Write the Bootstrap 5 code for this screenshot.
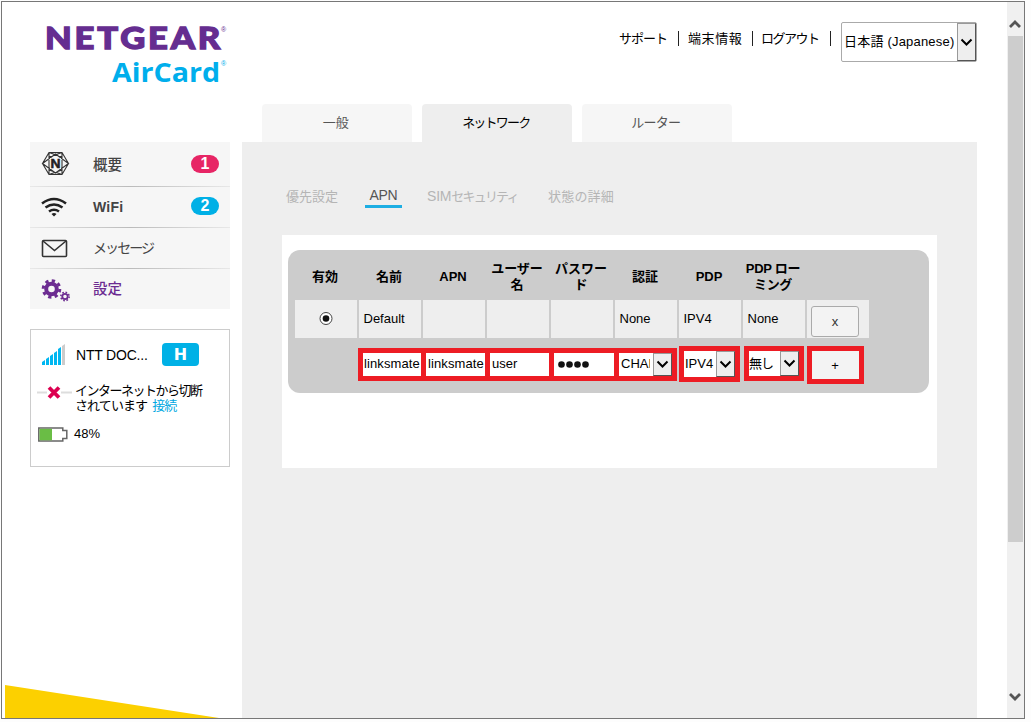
<!DOCTYPE html>
<html lang="ja">
<head>
<meta charset="utf-8">
<title>NETGEAR AirCard</title>
<link rel="stylesheet" href="https://cdn.jsdelivr.net/npm/bootstrap@5.3.0/dist/css/bootstrap.min.css">
<style>
body{margin:0;height:722px;overflow:hidden;background:#fdfdfd;font-family:"Liberation Sans","Noto Sans CJK JP",sans-serif;font-size:13px;line-height:16px;color:#000}
.frame{width:1024px;height:718px;margin:1px 0 0 1px;border:1px solid #777;background:#fff;overflow:hidden}
.page{padding:0 30px 0 28px}
.top{height:102px}
.brand{margin:18px 0 0 14px;overflow:visible}
.toplinks{padding-top:20px}
.toplinks .lnk{letter-spacing:-1px;height:32px;line-height:33px;white-space:nowrap}
.bar{width:1px;height:15px;background:#222;margin-top:9px}
.lang{width:136px;height:40px;border:1px solid #aaa;border-radius:2px;margin:0 0 0 10px}
.arrow{background:#eee;border:1px solid #999;border-right-color:#555;border-bottom-color:#555}
.side{width:200px;margin-top:38px}
.menu{background:#f6f6f6}
.item{height:40px;padding-left:11px;padding-right:11px;color:#444}
.item:first-child{height:44px}
.item .ico{width:52px;height:30px}
.rule{height:1px;background:linear-gradient(90deg,#e8e8e8,#bbb 50%,#e8e8e8)}
.pill{width:28px;height:18px;border-radius:9px;font:bold 16px/18px "Liberation Sans",sans-serif;color:#fff;text-align:center}
.purple{color:#6c2c91}
.status{height:138px;border:1px solid #ccc;margin-top:20px;padding:9px 7px 0 6px}
.hbadge{width:37px;height:23px;border-radius:4px;background:#00b1e6;color:#fff;font:900 16px/24px "DejaVu Sans",sans-serif;text-align:center}
.cyan{color:#00a7e1}
.main{width:735px;margin-left:12px}
.tabs{padding-left:20px;gap:10.5px;height:38px}
.tabx{width:149.5px;background:#f6f6f6;border-radius:4px 4px 0 0;text-align:center;line-height:38px;color:#555;padding-right:2px}
.tabx.on{background:#eee;color:#000}
.pane{background:#eee;height:578px;padding:45px 40px 0}
.subs{height:48px;padding-left:4px;color:#b5b5b5}
.subs .cur{color:#555;border-bottom:3px solid #1daee3;width:37px;text-align:center;font-size:14px;height:21px;line-height:17px;letter-spacing:-.3px}
.white{background:#fff;height:233px;padding:15px 8px 0 6px}
.grey{background:#ccc;height:143px;border-radius:12px;padding-left:7px}
.cells{display:grid;grid-template-columns:repeat(9,62px);column-gap:2px}
.heads{height:50px;padding-top:4px;font-weight:bold;align-items:center;text-align:center;margin-left:-1px;width:575px}
.vals>div{background:#eee;height:38px;line-height:37px;padding-left:4.5px}
.btnx{border:1px solid #aaa;border-radius:3px;background:#f3f3f3;color:#333;width:48px;height:31px;line-height:30px;text-align:center;margin-top:6px}
.edit{padding-left:63px;margin-top:8px}
.red{background:#ed1c24;display:flex}
.fld{background:#fff;white-space:nowrap;overflow:hidden;display:flex}
.fld .tx{overflow:hidden;flex:1;padding-left:2px}
.fld .arrow{width:19px;flex:none;display:flex;align-items:center;justify-content:center}
.scroll{width:17px;background:#f0f0f0;padding-left:1px}
.thumb{height:506px;width:15px;background:#cdcdcd}
.wedge{left:5px;top:685px}
</style>
</head>
<body>
<div class="frame d-flex">
 <div class="page flex-grow-1">
  <header class="top d-flex justify-content-between">
   <svg class="brand" width="200" height="70">
    <text x="1" y="29" font-family="Lato,sans-serif" font-size="31" font-weight="900" fill="#652d90" stroke="#652d90" stroke-width="1.300" letter-spacing="2.500" textLength="178" lengthAdjust="spacingAndGlyphs">NETGEAR</text>
    <text x="68" y="62" font-family="Open Sans,sans-serif" font-size="27.500" font-weight="700" fill="#00aeec" textLength="108" lengthAdjust="spacingAndGlyphs">AirCard</text>
    <text x="177" y="12" font-size="7" fill="#652d90">®</text><text x="177" y="46" font-size="7" fill="#00aeec">®</text>
   </svg>
   <nav class="toplinks d-flex">
    <span class="lnk" style="width:59px">サポート</span><i class="bar"></i>
    <span class="lnk" style="width:73px;padding-left:9px;letter-spacing:.6px">端末情報</span><i class="bar"></i>
    <span class="lnk" style="width:77px;padding-left:8px;letter-spacing:-1.500px">ログアウト</span><i class="bar"></i>
    <div class="lang d-flex"><span class="flex-grow-1 text-nowrap" style="padding-left:2px;line-height:38px;letter-spacing:.2px">日本語 (Japanese)</span><span class="arrow d-flex align-items-center justify-content-center" style="width:19px"><svg width="13" height="9"><path d="M1.500 1.500l5 5 5-5" fill="none" stroke="#000" stroke-width="2"/></svg></span></div>
   </nav>
  </header>
  <div class="d-flex">
   <aside class="side">
    <div class="menu">
     <div class="item d-flex align-items-center"><span class="ico"><svg width="30" height="30" viewBox="0 0 30 30" fill="none" stroke="#333" stroke-width="1.1"><path d="M8 3.500h13l6.500 11-6.500 11h-13l-6.500-11zM8 3.500L21 8M21 3.500L8 8M8 25.500L21 21M21 25.500L8 21M8 3.500v22M21 3.500v22M1.500 14.500L14.500 5l13 9.500L14.500 24z"/><rect x="9" y="9" width="11" height="11" fill="#f6f6f6" stroke="none"/><text x="9.500" y="19" font-size="12.500" font-weight="bold" font-family="Liberation Sans" fill="#222" stroke="#222" stroke-width=".5" textLength="10" lengthAdjust="spacingAndGlyphs">N</text></svg></span><b class="flex-grow-1" style="font-size:14.500px;font-weight:500;padding-top:2px">概要</b><span class="pill" style="background:#e72565">1</span></div>
     <div class="rule"></div>
     <div class="item d-flex align-items-center"><span class="ico"><svg width="26" height="30" viewBox="0 0 26 30" fill="none" stroke="#222" stroke-width="2.600"><path d="M1 11.500q12-9 24 0M4.500 15.500q8.500-6 17 0M8 19.500q5-3.500 10 0"/><path d="M10.500 22q2.500-2 5 0l-2.500 2.500z" fill="#222" stroke="none"/></svg></span><b class="flex-grow-1" style="font-size:14px;letter-spacing:.2px">WiFi</b><span class="pill" style="background:#00b0e6;margin-top:-2px">2</span></div>
     <div class="rule"></div>
     <div class="item d-flex align-items-center"><span class="ico"><svg width="27" height="30" fill="none" stroke="#333" stroke-width="1.600"><rect x="1.500" y="7.500" width="24" height="16" rx="1"/><path d="M2 8l11.500 9.500L25 8"/></svg></span><span style="font-size:14px;letter-spacing:-1.900px">メッセージ</span></div>
     <div class="rule"></div>
     <div class="item d-flex align-items-center"><span class="ico"><svg width="30" height="30" fill="none" stroke="#6c2c91"><circle cx="10.500" cy="15" r="5.300" stroke-width="4"/><circle cx="10.500" cy="15" r="8.300" stroke-width="3" stroke-dasharray="3.260 3.260"/><circle cx="24" cy="22.500" r="2.700" stroke-width="1.800"/><circle cx="24" cy="22.500" r="4.200" stroke-width="1.500" stroke-dasharray="1.650 1.650"/></svg></span><span class="purple" style="font-size:14.500px;font-weight:500">設定</span></div>
    </div>
    <div class="status">
     <div class="d-flex align-items-center" style="height:31px"><svg width="30" height="26" style="margin-left:4px"><path d="M1 23v-3l3-2v5zM5 23v-6l3-2v8zM9 23v-9l3-2v11zM13 23V11l3-2v14zM17 23V7l3-2v18z" fill="#00b7f1"/><path d="M21 23V4l3-2v21z" fill="#ccc"/></svg><span style="width:91px;font-size:14px;padding-left:5px;letter-spacing:-.2px">NTT DOC...</span><span class="hbadge">H</span></div>
     <div class="d-flex text-nowrap" style="margin-top:13px;line-height:15px"><svg width="38" height="18"><path d="M0 9.500h10M24 9.500h11" stroke="#ddd" stroke-width="2"/><path d="M12 4.500l10 10M22 4.500L12 14.500" stroke="#dc0050" stroke-width="3.800"/></svg><div><div style="letter-spacing:-1.500px">インターネットから切断</div><div style="letter-spacing:-.9px">されています<span class="cyan" style="padding-left:5px">接続</span></div></div></div>
     <div class="d-flex align-items-center" style="margin-top:12px"><svg width="36" height="16" style="margin-left:1px"><path d="M.8 2h24v2.500h4v8h-4v2.500h-24z" fill="#fff" stroke="#666" stroke-width="1.500"/><path d="M1.500 2.800h12.500v11.500H1.500z" fill="#6abd45"/></svg><span style="padding-top:1px">48%</span></div>
    </div>
   </aside>
   <main class="main">
    <div class="tabs d-flex"><div class="tabx">一般</div><div class="tabx on" style="letter-spacing:-1.800px">ネットワーク</div><div class="tabx" style="letter-spacing:-.7px">ルーター</div></div>
    <div class="pane">
     <div class="subs d-flex"><span style="width:79px;line-height:19px">優先設定</span><span class="cur">APN</span><span style="margin-left:25px;width:121px;line-height:18px;letter-spacing:-1.800px"><span style="font-size:14px;letter-spacing:-.2px">SIM</span>セキュリティ</span><span style="line-height:19px;letter-spacing:.2px">状態の詳細</span></div>
     <section class="white">
      <div class="grey">
       <div class="cells heads"><div>有効</div><div>名前</div><div>APN</div><div class="text-nowrap">ユーザー<br>名</div><div class="text-nowrap">パスワー<br>ド</div><div>認証</div><div>PDP</div><div class="text-nowrap" style="letter-spacing:-.300px">PDP ロー<br>ミング</div></div>
       <div class="cells vals"><div class="d-flex align-items-center justify-content-center p-0"><svg width="14" height="14"><circle cx="7" cy="6.500" r="6" fill="#fff" stroke="#444"/><circle cx="7" cy="6.500" r="3.300" fill="#111"/></svg></div><div>Default</div><div></div><div></div><div></div><div>None</div><div>IPV4</div><div>None</div><div style="padding-left:4px" class="d-flex"><span class="btnx">x</span></div></div>
       <div class="edit d-flex align-items-start">
        <div class="red" style="margin-top:2px;width:319px;height:33px;padding:5px">
         <div class="fld" style="width:58px;line-height:21px"><span class="tx" style="padding-left:1px;letter-spacing:.1px">linksmate</span></div>
         <div class="fld" style="width:59px;margin-left:5px;line-height:21px"><span class="tx" style="letter-spacing:.1px">linksmate</span></div>
         <div class="fld" style="width:59px;margin-left:5px;line-height:21px"><span class="tx">user</span></div>
         <div class="fld" style="width:60px;margin-left:5px"><svg width="40" height="22" fill="#111"><circle cx="7.500" cy="11.500" r="3.300"/><circle cx="15.500" cy="11.500" r="3.300"/><circle cx="23.500" cy="11.500" r="3.300"/><circle cx="31.500" cy="11.500" r="3.300"/></svg></div>
         <div class="fld" style="width:53px;margin-left:5px;line-height:21px"><span class="tx" style="margin-right:3px">CHAP</span><span class="arrow"><svg width="13" height="9"><path d="M1.500 1.500l5 5 5-5" fill="none" stroke="#000" stroke-width="2"/></svg></span></div>
        </div>
        <div class="red" style="margin-left:2px;width:61px;height:36px;padding:5px"><div class="fld w-100" style="line-height:25px"><span class="tx" style="padding-left:1px">IPV4</span><span class="arrow"><svg width="13" height="9"><path d="M1.500 1.500l5 5 5-5" fill="none" stroke="#000" stroke-width="2"/></svg></span></div></div>
        <div class="red" style="margin-left:4px;width:60px;height:35px;padding:5px"><div class="fld w-100" style="line-height:25px"><span class="tx" style="padding-left:0;letter-spacing:-1px">無し</span><span class="arrow"><svg width="13" height="9"><path d="M1.500 1.500l5 5 5-5" fill="none" stroke="#000" stroke-width="2"/></svg></span></div></div>
        <div class="red" style="margin-left:3px;width:57px;height:38px;padding:5px"><div class="w-100 text-center" style="background:#f3f3f3;line-height:29px;padding-right:1px">+</div></div>
       </div>
      </div>
     </section>
    </div>
   </main>
  </div>
 </div>
 <div class="scroll d-flex flex-column">
  <svg width="16" height="34"><path d="M2 25l5-5 5 5" fill="none" stroke="#555" stroke-width="2.800"/></svg>
  <div class="thumb"></div>
  <svg width="16" height="26" class="mt-auto mb-2"><path d="M2 10l5 5 5-5" fill="none" stroke="#555" stroke-width="2.800"/></svg>
 </div>
</div>
<svg class="wedge position-absolute" width="214" height="33"><path d="M0 0L214 33H0z" fill="#fcd000"/></svg>
<script src="https://cdn.jsdelivr.net/npm/bootstrap@5.3.0/dist/js/bootstrap.bundle.min.js"></script>
</body>
</html>
